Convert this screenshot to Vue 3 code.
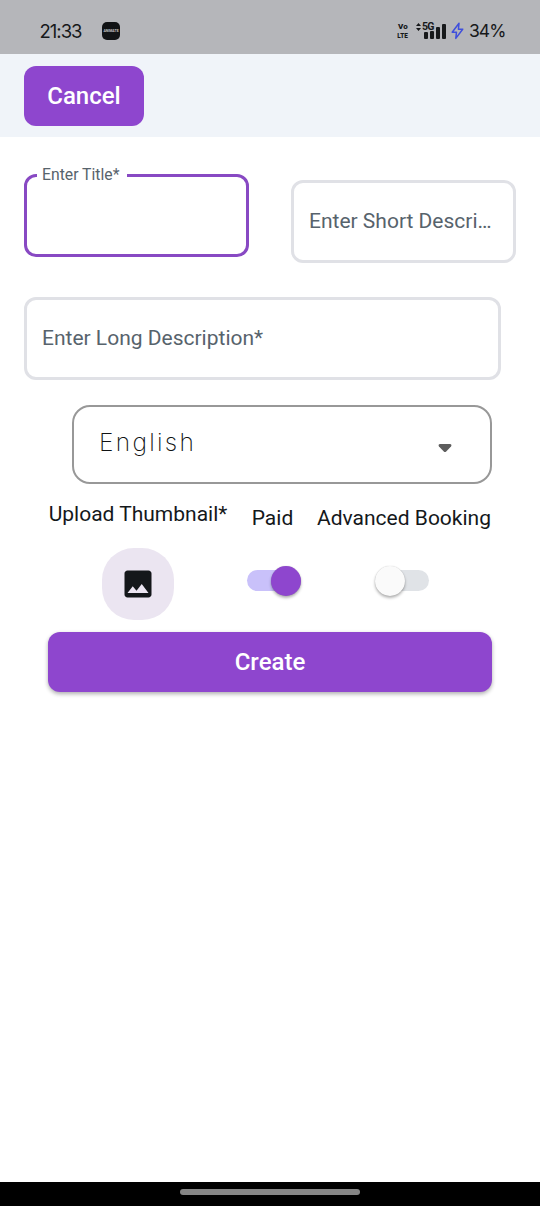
<script setup>
import { ref } from 'vue'

const language = ref('English')
const paid = ref(true)
const advanced = ref(false)
const signalBars = [7, 8, 12, 15]
</script>

<template>
  <div class="screen">
    <header class="status">
      <span class="clock">21:33</span>
      <span class="notif"><span>ANIMATE</span></span>
      <div class="indicators">
        <div class="volte"><span>Vo</span><span>LTE</span></div>
        <div class="signal">
          <svg class="updown" width="5" height="8" viewBox="0 0 5 8"><path d="M0 3L2.5 0L5 3ZM0 5L2.5 8L5 5Z" fill="#17191b" /></svg>
          <span class="net">5G</span>
          <div class="bars"><i v-for="(h, n) in signalBars" :key="n" :style="{ height: h + 'px' }"></i></div>
        </div>
        <svg class="bolt" width="13" height="18" viewBox="0 0 13 18">
          <path d="M8 1.3L1.2 10.2H5.5L4.8 16.4L11.7 7.2H7.4Z" fill="none" stroke="#3f4fdc" stroke-width="1.5" stroke-linejoin="round" />
        </svg>
        <span class="battery">34%</span>
      </div>
    </header>

    <div class="appbar"><button class="btn cancel">Cancel</button></div>

    <main>
      <div class="fields">
        <div class="field active"><span class="floating">Enter Title*</span></div>
        <div class="field short"><span>Enter Short Descri…</span></div>
      </div>
      <div class="field long"><span>Enter Long Description*</span></div>

      <div class="select">
        <span>{{ language }}</span>
        <svg width="14" height="9" viewBox="0 0 14 9"><path d="M1.8 0H12.2Q14.2 .8 13 2.5L8.2 7.5Q7 8.7 5.8 7.5L1 2.5Q-.2 .8 1.8 0Z" fill="#5d5d5d" /></svg>
      </div>

      <div class="options">
        <div class="option upload">
          <span class="label">Upload Thumbnail*</span>
          <div class="thumb">
            <svg width="36" height="36" viewBox="0 0 24 24"><path d="M21 19V5c0-1.1-.9-2-2-2H5c-1.1 0-2 .9-2 2v14c0 1.1.9 2 2 2h14c1.1 0 2-.9 2-2zM8.5 13.5l2.5 3.01L14.5 12l4.5 6H5l3.5-4.5z" fill="#14171a" /></svg>
          </div>
        </div>
        <div class="option paid">
          <span class="label">Paid</span>
          <div class="switch" :class="{ on: paid }"><i></i></div>
        </div>
        <div class="option advanced">
          <span class="label">Advanced Booking</span>
          <div class="switch" :class="{ on: advanced }"><i></i></div>
        </div>
      </div>
      <button class="btn create">Create</button>
    </main>

    <footer><i></i></footer>
  </div>
</template>

<style>
body { background: #fff; }
</style>

<style scoped>
* { box-sizing: border-box; }
.screen { width: 540px; height: 1206px; display: flex; flex-direction: column; background: #fff; font-family: Roboto, sans-serif; overflow: hidden; }
.status { height: 53.5px; flex: none; background: #b5b6ba; display: flex; align-items: center; padding: 9px 34.5px 0 39.5px; color: #17191b; }
.clock { font: 400 18.5px/22px Inter, sans-serif; letter-spacing: -1px; width: 62.5px; }
.notif { width: 18px; height: 18px; border-radius: 5px; background: #111315; display: flex; align-items: center; justify-content: center; color: #c5c5c5; font-size: 3.5px; font-weight: 700; line-height: 4px; }
.indicators { margin-left: auto; display: flex; align-items: center; }
.volte { width: 12px; display: flex; flex-direction: column; align-items: center; font-size: 8px; line-height: 9px; font-weight: 900; margin-right: 7px; }
.volte span { height: 9px; }
.volte span:last-child { transform: scaleX(.8); }
.signal { width: 30px; height: 16px; position: relative; margin-right: 5px; }
.updown { position: absolute; left: 0; top: 0; }
.net { position: absolute; left: 6px; top: -1px; font-size: 10.5px; line-height: 10px; font-weight: 700; letter-spacing: -.7px; }
.bars { position: absolute; right: 0; bottom: 0; display: flex; align-items: flex-end; gap: 2px; }
.bars i { width: 4px; background: #17191b; border-radius: 1px; }
.bolt { margin-right: 5px; }
.battery { font: 400 17.5px/22px Inter, sans-serif; letter-spacing: -.9px; }
.appbar { height: 83.5px; flex: none; background: #f0f4f9; padding: 12px 24px; }
.btn { display: block; border: 0; padding: 0; height: 60px; background: #8e46ce; color: #fff; border-radius: 12px; font: 500 24px/60px Roboto, sans-serif; letter-spacing: 0; text-align: center; }
.cancel { width: 120px; }
main { flex: 1; padding: 36.6px 24px 0; }
.fields { display: flex; justify-content: space-between; }
.field { height: 83.5px; border: 3px solid #e0e1e6; border-radius: 12px; padding: 0 15px; display: flex; align-items: center; color: #57636c; font-size: 21px; white-space: nowrap; }
.field.active, .field.short { width: 225px; }
.field.active { border-color: #8849c3; position: relative; }
.field.short { margin-top: 6px; padding-bottom: 1px; }
.field.long { width: 477px; margin-top: 33.9px; padding-bottom: 1px; height: 83px; }
.floating { position: absolute; left: 10px; top: -11px; background: #fff; padding: 0 8px 0 5px; font-size: 15.75px; line-height: 18px; }
.select { height: 79px; margin: 25px 0 0 48px; width: 420px; border: 2px solid #989898; border-radius: 18px; padding: 0 38px 0 25px; display: flex; align-items: center; justify-content: space-between; font: 200 24.5px/30px Inter, sans-serif; letter-spacing: 2.3px; color: #101213; }
.select span { margin-top: -4px; }
.select svg { margin-top: 8px; }
.options { display: flex; padding: 0 24px; height: 148.5px; }
.option { display: flex; flex-direction: column; align-items: center; color: #14181b; font-size: 21px; line-height: 24px; white-space: nowrap; }
.upload { width: 180px; padding-top: 18px; }
.paid { width: 89px; padding-top: 22px; }
.advanced { width: 174px; padding-top: 22px; }
.thumb { width: 72px; height: 72px; margin-top: 22.5px; border-radius: 32px; background: #ebe5f1; display: flex; align-items: center; justify-content: center; }
.switch { width: 54px; height: 21px; border-radius: 11px; background: #e0e3e7; margin-top: 40.5px; display: flex; align-items: center; }
.paid .switch { margin-left: 3.5px; }
.advanced .switch { margin-right: 4px; }
.switch i { width: 30px; height: 30px; flex: none; border-radius: 50%; background: #fafafa; box-shadow: 0 2px 3px rgba(0,0,0,.3), 0 0 1px rgba(0,0,0,.2); }
.switch.on { background: #c9c1fa; justify-content: flex-end; }
.switch.on i { background: #8e46ce; }
.create { width: 444px; margin-left: 24px; box-shadow: 0 2px 4px rgba(0,0,0,.32); }
footer { height: 24px; flex: none; background: #000; display: flex; justify-content: center; padding-top: 7px; }
footer i { width: 180px; height: 6px; border-radius: 3px; background: #858585; }
</style>
